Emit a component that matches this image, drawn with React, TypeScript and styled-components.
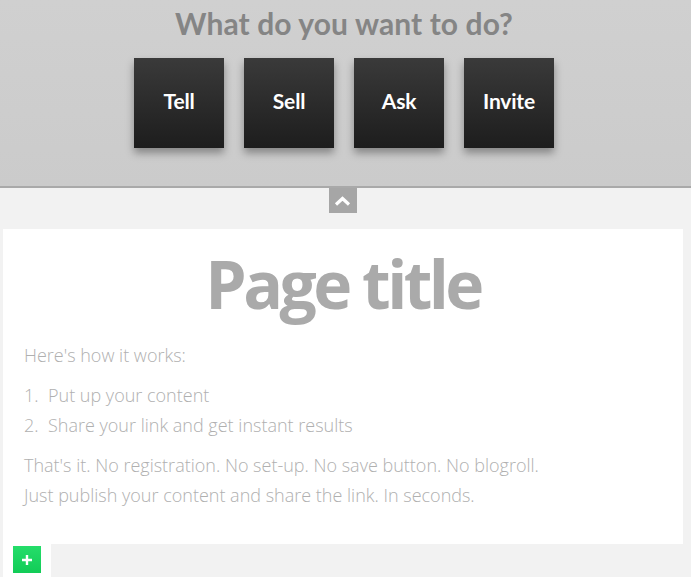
import React from 'react'
import styled, { createGlobalStyle } from 'styled-components'

const GlobalStyle = createGlobalStyle`
  html, body {
    margin: 0;
    padding: 0;
    background: #f2f2f2;
  }
  * { box-sizing: border-box; }
`

const Chooser = styled.div`
  background: linear-gradient(#d0d0d0, #cbcbcb);
  height: 188px;
  border-bottom: 2px solid #a9a9a9;
  display: flex;
  flex-direction: column;
  align-items: center;
  padding-right: 3px;
`

const Question = styled.h1`
  margin: 5px 0 0;
  font-family: Lato, "Open Sans", sans-serif;
  font-weight: 700;
  font-size: 30px;
  line-height: 36px;
  color: #858585;
  letter-spacing: 0.1px;
`

const Actions = styled.div`
  display: flex;
  gap: 20px;
  margin-top: 17px;
`

const Action = styled.button`
  width: 90px;
  height: 90px;
  border: 0;
  padding: 0 0 6px;
  background: linear-gradient(#3a3a3a, #1d1d1d);
  box-shadow: 0 5px 8px rgba(0, 0, 0, 0.35);
  color: #fff;
  font-family: Lato, "Open Sans", sans-serif;
  font-weight: 700;
  font-size: 21px;
  letter-spacing: -0.2px;
  cursor: pointer;
`

const TabRow = styled.div`
  display: flex;
  justify-content: center;
  padding-right: 6px;
`

const Toggle = styled.div`
  width: 28px;
  height: 25px;
  background: #a6a6a6;
  display: flex;
  align-items: center;
  justify-content: center;
`

const Card = styled.div`
  background: #fff;
  margin: 16px 8px 0 3px;
  padding: 14px 21px 34px;
`

const Title = styled.h2`
  margin: 0;
  text-align: center;
  font-family: "Open Sans", sans-serif;
  font-weight: 700;
  font-size: 66px;
  line-height: 80px;
  letter-spacing: -3.6px;
  color: #aaaaaa;
`

const Text = styled.p<{ $top?: number }>`
  margin: ${p => p.$top ?? 10}px 0 0;
  font-family: "Open Sans", sans-serif;
  font-weight: 300;
  font-size: 18px;
  line-height: 30px;
  color: #b0b0b0;
`

const Steps = styled.ol`
  margin: 10px 0 0;
  padding: 0;
  list-style: none;
  counter-reset: step;
  font-family: "Open Sans", sans-serif;
  font-weight: 300;
  font-size: 18px;
  line-height: 30px;
  color: #b0b0b0;

  li {
    counter-increment: step;
    display: flex;
  }

  li::before {
    content: counter(step) ".";
    width: 24px;
    flex: none;
  }
`

const Footer = styled.div`
  display: flex;
`

const Tools = styled.div`
  width: 48px;
  height: 34px;
  margin-left: 3px;
  background: #fff;
  padding: 2px 0 0 10px;
`

const AddButton = styled.button`
  width: 28px;
  height: 27px;
  border: 0;
  padding: 0;
  background: linear-gradient(#25dd6a, #12cc57);
  display: flex;
  align-items: center;
  justify-content: center;
  cursor: pointer;
`

export default function App() {
  const actions = ['Tell', 'Sell', 'Ask', 'Invite']

  return (
    <>
      <GlobalStyle />
      <Chooser>
        <Question>What do you want to do?</Question>
        <Actions>
          {actions.map(a => (
            <Action key={a}>{a}</Action>
          ))}
        </Actions>
      </Chooser>

      <TabRow>
        <Toggle>
          <svg width="17" height="10" viewBox="0 0 17 10">
            <path d="M2 8.5 L8.5 2.5 L15 8.5" fill="none" stroke="#fff" strokeWidth="3.2" />
          </svg>
        </Toggle>
      </TabRow>

      <Card>
        <Title>Page title</Title>
        <Text $top={17}>Here's how it works:</Text>
        <Steps>
          <li>Put up your content</li>
          <li>Share your link and get instant results</li>
        </Steps>
        <Text>
          That's it. No registration. No set-up. No save button. No blogroll.
          <br />
          Just publish your content and share the link. In seconds.
        </Text>
      </Card>

      <Footer>
        <Tools>
          <AddButton>
            <svg width="12" height="12" viewBox="0 0 12 12">
              <path d="M6 1 V11 M1 6 H11" stroke="#fff" strokeWidth="2.4" />
            </svg>
          </AddButton>
        </Tools>
      </Footer>
    </>
  )
}
